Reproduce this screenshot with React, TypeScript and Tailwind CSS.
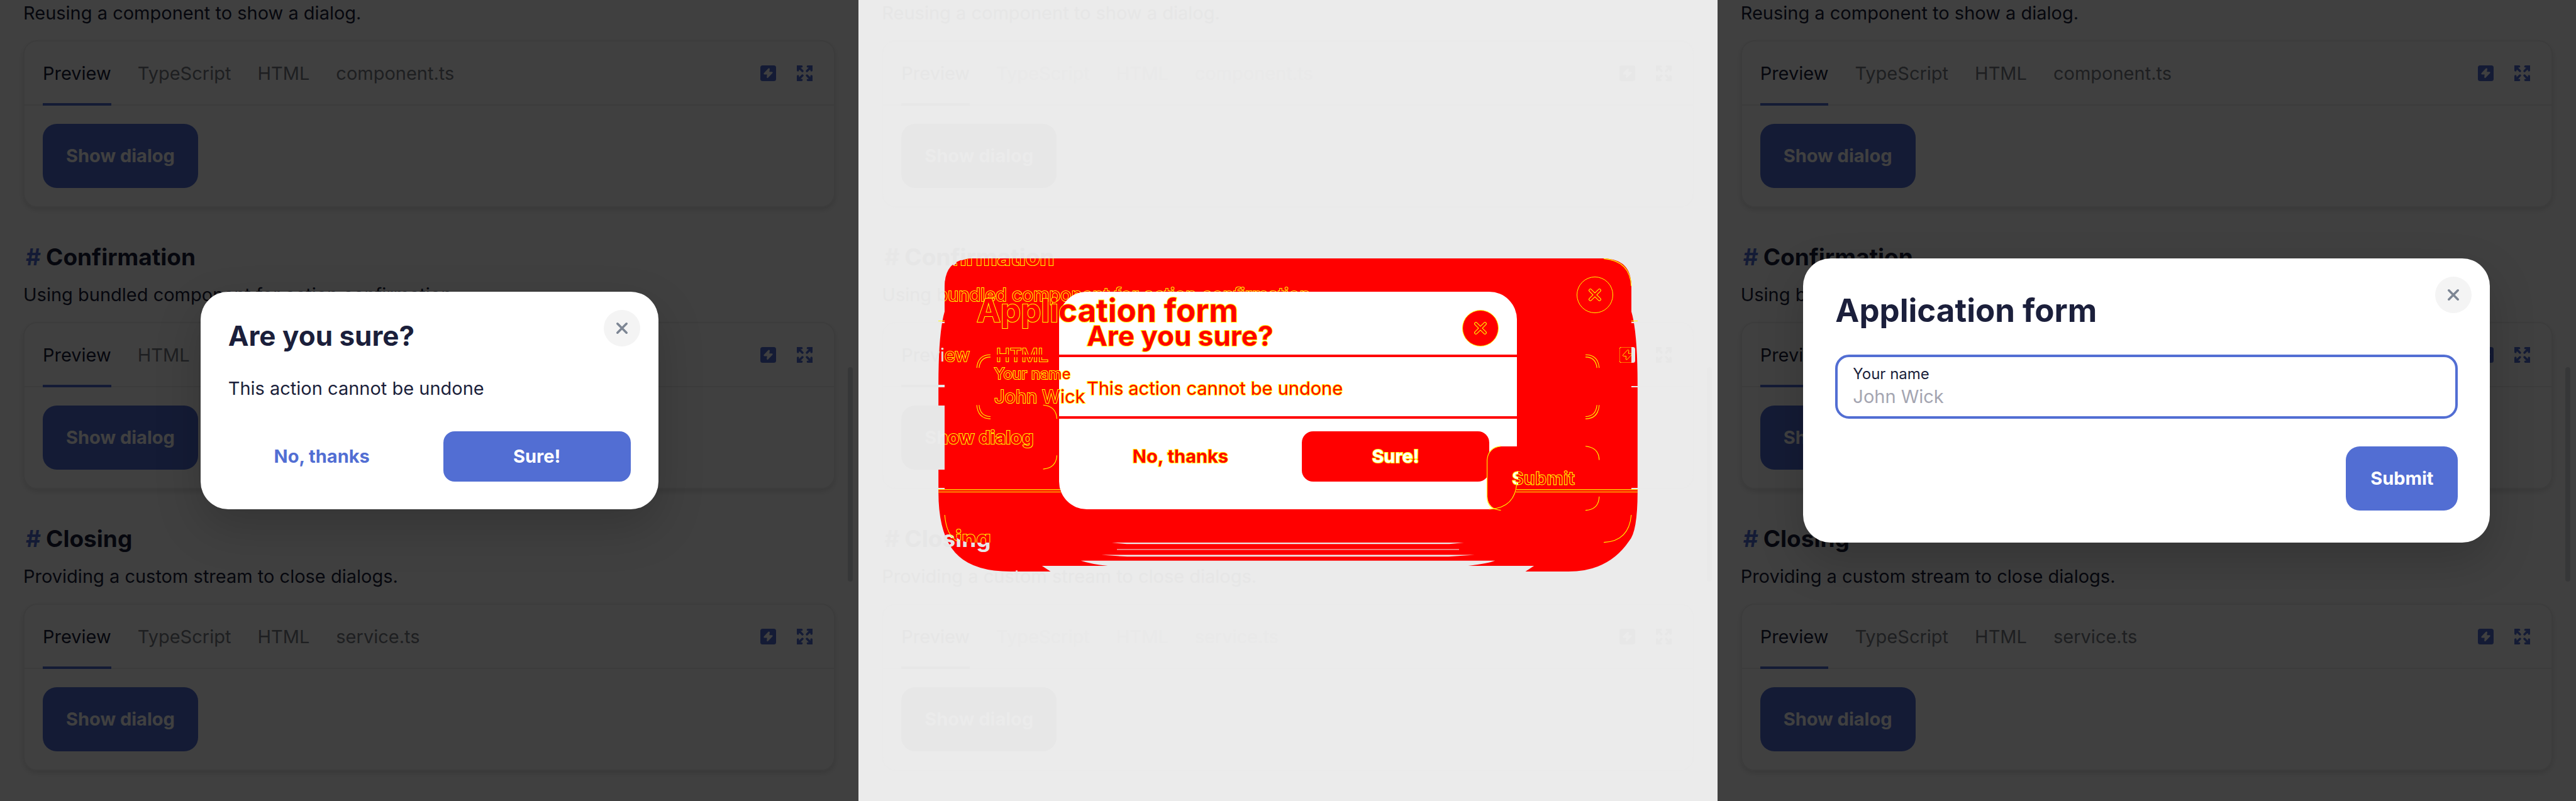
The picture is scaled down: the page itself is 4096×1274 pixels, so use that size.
import React from 'react';

type Tone = 'page' | 'ghost' | 'outline';

type ToneStyle = {
  text: string;
  muted: string;
  hash: string;
  button: string;
  line: string;
  card: string;
  bar: string;
  icon: string;
  glyph: string;
  scroll: string;
};

const OUTLINED = 'text-[#ff0000] [paint-order:stroke_fill] [-webkit-text-stroke:2px_#ffff00]';

const tones: Record<Tone, ToneStyle> = {
  page: {
    text: 'text-[#1b1f3b]',
    muted: 'text-[#787c84]',
    hash: 'text-[#526ed3]',
    button: 'bg-[#526ed3] text-white',
    line: 'border-[#ededed]',
    card: 'shadow-[0_4px_8px_rgba(0,0,0,0.12)]',
    bar: 'bg-[#526ed3]',
    icon: 'text-[#526ed3]',
    glyph: '#ffffff',
    scroll: 'bg-[#d8d9dd]',
  },
  ghost: {
    text: 'text-[#e6e6e6]',
    muted: 'text-[#e9e9e9]',
    hash: 'text-[#e7e7e7]',
    button: 'bg-[#e7e7e7] text-[#ebebeb]',
    line: 'border-[#eaeaea]',
    card: '',
    bar: 'bg-[#e7e7e7]',
    icon: 'text-[#e7e7e7]',
    glyph: '#ebebeb',
    scroll: 'bg-[#e9e9e9]',
  },
  outline: {
    text: OUTLINED,
    muted: OUTLINED,
    hash: OUTLINED,
    button: OUTLINED,
    line: 'border-transparent',
    card: '',
    bar: 'bg-transparent',
    icon: 'text-[#ff0000] [stroke:#ffff00]',
    glyph: '#ff0000',
    scroll: 'bg-transparent',
  },
};

type Section = { title?: string; text: string; tabs: string[] };

const sections: Section[] = [
  { text: 'Reusing a component to show a dialog.', tabs: ['Preview', 'TypeScript', 'HTML', 'component.ts'] },
  { title: 'Confirmation', text: 'Using bundled component for action confirmation.', tabs: ['Preview', 'HTML'] },
  {
    title: 'Closing',
    text: 'Providing a custom stream to close dialogs.',
    tabs: ['Preview', 'TypeScript', 'HTML', 'service.ts'],
  },
];

function BoltIcon({ glyph }: { glyph: string }) {
  return (
    <svg viewBox="0 0 28 28" className="size-[25px]" aria-hidden="true">
      <rect width="28" height="28" rx="4" fill="currentColor" />
      <path
        d="M14 5.6 6.4 13.8Q5.2 16 7.6 16.2H12L11.4 21.4Q12 23.2 13.6 22.2L21.6 13.8Q22.8 11.4 20.4 11.4H16L16.8 6.2Q15.8 4.2 14 5.6Z"
        fill={glyph}
      />
    </svg>
  );
}

function ExpandIcon() {
  return (
    <svg viewBox="0 0 28 28" className="size-[25px]" aria-hidden="true">
      {['', 'translate(28 0) scale(-1 1)', 'translate(0 28) scale(1 -1)', 'translate(28 28) scale(-1 -1)'].map((t) => (
        <path
          key={t}
          transform={t}
          d="M2 9V2H8.5M3 3l7 7"
          fill="none"
          stroke="currentColor"
          strokeWidth="4"
          strokeLinecap="round"
        />
      ))}
    </svg>
  );
}

function Example({ section, tone }: { section: Section; tone: Tone }) {
  const s = tones[tone];
  return (
    <section>
      {section.title && (
        <h2 className={`mb-[18px] flex gap-[8px] pl-[4px] text-[37px] leading-[44px] font-bold ${s.text}`}>
          <a href="#example" className={s.hash}>
            #
          </a>
          {section.title}
        </h2>
      )}
      <p className={`mb-[23px] text-[29px] leading-[40px] ${s.text}`}>{section.text}</p>
      <div className={`rounded-[22px] border-2 ${s.line} ${s.card}`}>
        <div className={`flex h-[102px] items-stretch justify-between border-b-2 px-[29px] ${s.line}`}>
          <div className="-mb-[2px] flex gap-[42px]" role="tablist">
            {section.tabs.map((tab, i) => (
              <button
                key={tab}
                type="button"
                role="tab"
                aria-selected={i === 0}
                className={`relative text-[29px] leading-[40px] ${i === 0 ? s.text : s.muted}`}
              >
                {tab}
                {i === 0 && <span className={`absolute inset-x-0 bottom-0 h-[4px] ${s.bar}`} />}
              </button>
            ))}
          </div>
          <div className={`flex items-center gap-[33px] pr-[5px] ${s.icon}`}>
            <button type="button" aria-label="Open in editor">
              <BoltIcon glyph={s.glyph} />
            </button>
            <button type="button" aria-label="Fullscreen">
              <ExpandIcon />
            </button>
          </div>
        </div>
        <div className="px-[29px] pt-[29px] pb-[29px]">
          <button type="button" className={`h-[102px] rounded-[22px] px-[37px] text-[29px] leading-[40px] font-bold ${s.button}`}>
            Show dialog
          </button>
        </div>
      </div>
    </section>
  );
}

function Page({ tone }: { tone: Tone }) {
  return (
    <div className="relative h-full min-h-screen px-[37px] pt-px">
      <div className="flex flex-col gap-[57px]">
        {sections.map((section) => (
          <Example key={section.text} section={section} tone={tone} />
        ))}
      </div>
      <span className={`absolute top-[584px] right-[9px] h-[341px] w-[8px] rounded-full ${tones[tone].scroll}`} />
    </div>
  );
}

function CloseButton({ diff }: { diff?: 'filled' | 'line' }) {
  const skin =
    diff === 'filled'
      ? 'bg-[#ff0000] border border-[#ffff00] text-[#ffff00]'
      : diff === 'line'
        ? 'border border-[#ffff00] text-[#ffff00]'
        : 'bg-[#f4f4f4] text-[#7d8694]';
  return (
    <button
      type="button"
      aria-label="Close"
      className={`absolute top-[29px] right-[29px] flex size-[58px] items-center justify-center rounded-full ${skin}`}
    >
      <svg viewBox="0 0 20 20" className="size-[18px] overflow-visible" fill="none" strokeLinecap="round" aria-hidden="true">
        <path d="M2 2l16 16M18 2 2 18" stroke="currentColor" strokeWidth={diff ? 6 : 4} />
        {diff && <path d="M2 2l16 16M18 2 2 18" stroke="#ff0000" strokeWidth="3.6" />}
      </svg>
    </button>
  );
}

const DIALOG_SHADOW = 'shadow-[0_29px_73px_rgba(0,0,0,0.18)]';

function ConfirmDialog({ diff = false }: { diff?: boolean }) {
  const text = diff ? OUTLINED : 'text-[#1b1f3b]';
  return (
    <div
      role="dialog"
      aria-label="Are you sure?"
      className={`relative w-[728px] rounded-[44px] bg-white p-[44px] ${diff ? '' : DIALOG_SHADOW}`}
    >
      <CloseButton diff={diff ? 'filled' : undefined} />
      <h2 className={`text-[44px] leading-[52px] font-bold ${text}`}>Are you sure?</h2>
      <p className={`mt-[38px] text-[29px] leading-[40px] ${text}`}>This action cannot be undone</p>
      <div className="mt-[48px] grid grid-cols-2 gap-[44px] text-[29px] leading-[40px] font-bold">
        <button type="button" className={`h-[80px] rounded-[18px] ${diff ? OUTLINED : 'text-[#526ed3]'}`}>
          No, thanks
        </button>
        <button
          type="button"
          className={`h-[80px] rounded-[18px] text-white ${
            diff ? 'bg-[#ff0000] [paint-order:stroke_fill] [-webkit-text-stroke:2px_#ffff00]' : 'bg-[#526ed3]'
          }`}
        >
          Sure!
        </button>
      </div>
    </div>
  );
}

function FormDialog({ diff = false }: { diff?: boolean }) {
  const id = diff ? 'name-diff' : 'name';
  const text = diff ? OUTLINED : 'text-[#1b1f3b]';
  return (
    <div
      role="dialog"
      aria-label="Application form"
      className={`relative w-[1092px] rounded-[44px] p-[51px] ${diff ? '' : `bg-white ${DIALOG_SHADOW}`}`}
    >
      <CloseButton diff={diff ? 'line' : undefined} />
      <h2 className={`text-[51px] leading-[64px] font-bold ${text}`}>Application form</h2>
      <div
        className={`mt-[38px] flex h-[102px] flex-col justify-center rounded-[22px] border-4 px-[24px] ${
          diff ? 'border-[#ff0000]' : 'border-[#526ed3]'
        }`}
      >
        <label htmlFor={id} className={`text-[24px] leading-[32px] ${text}`}>
          Your name
        </label>
        <input
          id={id}
          placeholder="John Wick"
          className={`h-[40px] w-full bg-transparent text-[29px] leading-[40px] outline-none ${
            diff
              ? 'placeholder:text-[#ff0000] [paint-order:stroke_fill] [-webkit-text-stroke:2px_#ffff00]'
              : 'placeholder:text-[#a4a5b1]'
          }`}
        />
      </div>
      <div className="mt-[44px] flex justify-end">
        <button
          type="submit"
          className={`h-[102px] min-w-[178px] rounded-[22px] px-[37px] text-[29px] leading-[40px] font-bold ${
            diff ? 'bg-[#ff0000]' : 'bg-[#526ed3] text-white'
          }`}
        >
          <span
            className={
              diff
                ? 'bg-[linear-gradient(90deg,#ffffff_10%,#ff0000_10%)] bg-clip-text text-transparent [-webkit-text-stroke:1px_#ffff00]'
                : ''
            }
          >
            Submit
          </span>
        </button>
      </div>
    </div>
  );
}

/* Solid area that differs between the two states, including the shadow fringe. */
function DiffArea() {
  return (
    <svg viewBox="1639 401 1222 598" className="h-[544px] w-[1112px] shrink-0" aria-hidden="true">
      <path
        fill="#ff0000"
        d="M1650 500Q1650 452 1698 452H2802Q2850 452 2850 500V544Q2861 580 2861 672V860Q2861 930 2846 946Q2810 999 2740 999H2665L2680 989H2565Q2600 985 2612 980H1888Q1905 986 1935 989H1820L1835 999H1765Q1690 999 1662 958Q1639 925 1639 860V672Q1639 580 1650 544Z"
      />
      <path fill="#ebebeb" d="M1937 948H2563L2532 951H1968ZM1951 960H2549V961H1951ZM1924 970H2576L2531 973H1969Z" />
    </svg>
  );
}

/* Edge pixels of overlapping rounded corners. */
function DiffEdges() {
  return (
    <svg viewBox="1639 401 1222 598" className="h-[544px] w-[1112px] shrink-0" aria-hidden="true">
      <g fill="none" stroke="#ffff00" strokeWidth="1.2">
        <path d="M1634 856H1852M1639 860H1853M2649 856H2861M2648 860H2861M1634 561H1650M2850 561H2866" />
        <path d="M1706 643Q1708 620 1730 620M1710 643Q1712 624 1730 624" />
        <path d="M1706 708Q1708 732 1730 732M1710 708Q1712 728 1730 728" />
        <path d="M2770 620Q2792 620 2794 643M2770 624Q2788 624 2790 643" />
        <path d="M2794 708Q2792 732 2770 732M2790 708Q2788 728 2770 728" />
        <path d="M1822 708Q1845 710 1846 732M1846 796Q1845 818 1822 820" />
        <path d="M2770 780Q2793 782 2794 804M2794 868Q2793 891 2770 892" />
        <path d="M2622 892Q2598 890 2598 868V804Q2600 782 2622 780" />
        <path d="M2650 842Q2648 888 2602 890" />
        <path d="M2850 900Q2846 946 2802 948M1650 900Q1653 936 1672 946" />
        <path d="M2802 452Q2848 456 2850 500" />
      </g>
    </svg>
  );
}

const LAYER = 'absolute inset-0 flex items-center justify-center';

function DiffPanel() {
  return (
    <div className="relative overflow-hidden bg-[#ebebeb]">
      <div className={LAYER}>
        <DiffArea />
      </div>
      <Page tone="ghost" />
      <div
        aria-hidden="true"
        className="absolute inset-0 bg-[#ff0000] [clip-path:inset(calc(50%_-_226px)_calc(50%_-_546px)_calc(50%_-_226px)_calc(50%_-_546px)_round_44px)]"
      >
        <Page tone="outline" />
      </div>
      <div className={LAYER}>
        <ConfirmDialog diff />
      </div>
      <div className={LAYER}>
        <FormDialog diff />
      </div>
      <div className={`${LAYER} pointer-events-none`}>
        <DiffEdges />
      </div>
    </div>
  );
}

function ModalPanel({ children }: { children: React.ReactNode }) {
  return (
    <div className="relative overflow-hidden bg-white">
      <Page tone="page" />
      <div className={`${LAYER} bg-black/75`}>{children}</div>
    </div>
  );
}

export default function App() {
  return (
    <main className="grid min-h-screen grid-cols-3 font-['Inter','Liberation_Sans',sans-serif]">
      <ModalPanel>
        <ConfirmDialog />
      </ModalPanel>
      <DiffPanel />
      <ModalPanel>
        <FormDialog />
      </ModalPanel>
    </main>
  );
}
